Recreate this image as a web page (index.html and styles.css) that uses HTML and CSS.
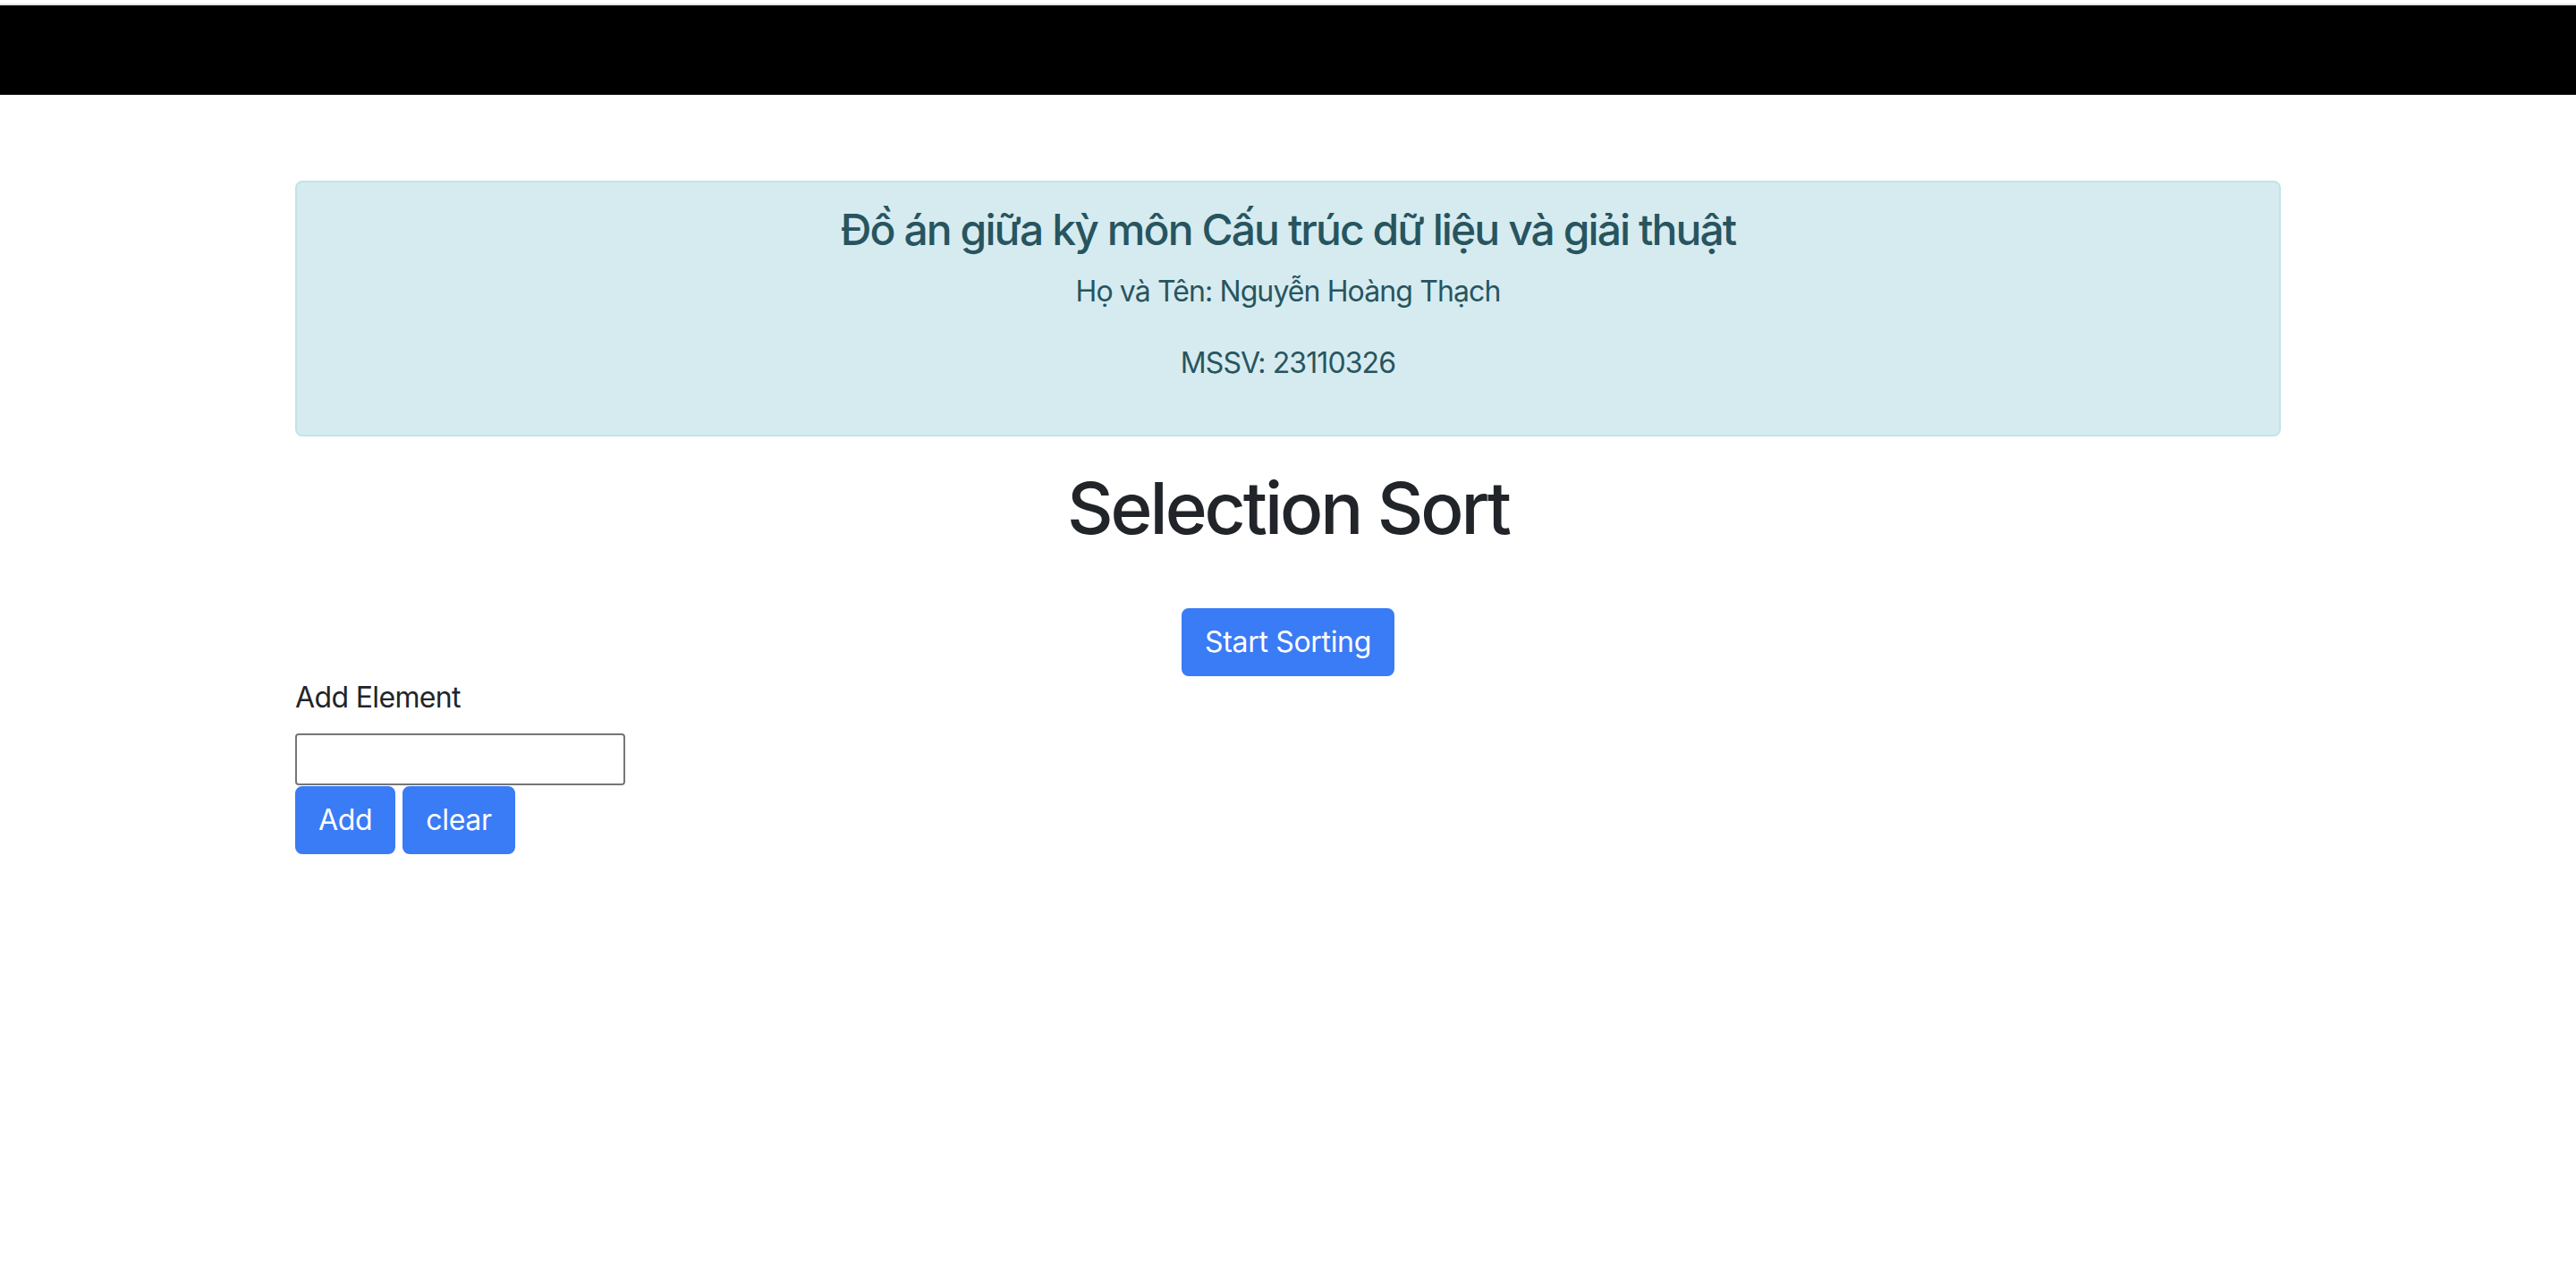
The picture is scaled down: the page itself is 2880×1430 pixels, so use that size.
FILE: index.html
```html
<!DOCTYPE html>
<html lang="vi">
<head>
<meta charset="utf-8">
<title>Selection Sort</title>
<link rel="stylesheet" href="styles.css">
</head>
<body>
<div class="topbar"></div>
<main class="container">
  <div class="alert">
    <h4 class="alert-title">Đồ án giữa kỳ môn Cấu trúc dữ liệu và giải thuật</h4>
    <p class="alert-text">Họ và Tên: Nguyễn Hoàng Thạch</p>
    <p class="alert-text">MSSV: 23110326</p>
  </div>
  <h1 class="page-title">Selection Sort</h1>
  <div class="actions"><button class="btn" type="button">Start Sorting</button></div>
  <label class="field-label" for="elem">Add Element</label>
  <input class="field-input" id="elem" type="text">
  <div class="btn-row">
    <button class="btn" type="button">Add</button>
    <button class="btn" type="button">clear</button>
  </div>
</main>
</body>
</html>
```

FILE: styles.css
```css
html, body {
  margin: 0;
  padding: 0;
  background: #ffffff;
}

body {
  font-family: Inter, "Noto Sans", "Liberation Sans", sans-serif;
  font-size: 32px;
  line-height: 1.5;
  letter-spacing: -0.02em;
  color: #212529;
}

.topbar {
  margin-top: 4px;
  border-top: 2px solid #e4e4e4;
  height: 100px;
  background: #000000;
}

.container {
  width: 2220px;
  margin: 0 auto;
}

.alert {
  margin: 96px 0 32px;
  padding: 24px 40px;
  border: 2px solid #c2e3ea;
  border-radius: 8px;
  background: #d6ebf0;
  color: #27555f;
  text-align: center;
}

.alert-title {
  margin: 0 0 16px;
  font-size: 48px;
  font-weight: 500;
  line-height: 1.2;
  letter-spacing: -0.04em;
}

.alert-text {
  margin: 0 0 32px;
  letter-spacing: -0.028em;
}

.page-title {
  margin: 0;
  padding-bottom: 16px;
  font-size: 80px;
  font-weight: 500;
  line-height: 1.2;
  letter-spacing: -0.038em;
  text-align: center;
  color: #212529;
}

.actions {
  margin-top: 48px;
  display: flex;
  justify-content: center;
}

.btn {
  display: inline-block;
  font-family: inherit;
  font-size: 32px;
  line-height: 48px;
  letter-spacing: -0.01em;
  padding: 12px 24px;
  border: 2px solid #3a7bf6;
  border-radius: 8px;
  background: #3a7bf6;
  color: #ffffff;
  cursor: pointer;
}

.field-label {
  display: block;
  margin-bottom: 16px;
}

.field-input {
  display: block;
  box-sizing: border-box;
  width: 369px;
  height: 58px;
  margin: 0;
  padding: 2px 4px;
  border: 2px solid #767676;
  border-radius: 4px;
  font-family: inherit;
  font-size: 32px;
  background: #ffffff;
}

.btn-row {
  display: flex;
  gap: 8px;
  margin-top: 1px;
}
```
